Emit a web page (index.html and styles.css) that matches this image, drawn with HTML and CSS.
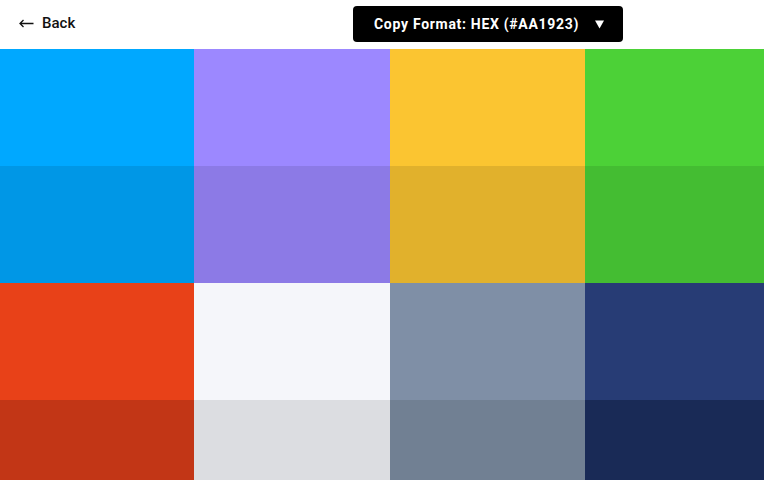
FILE: index.html
```html
<!DOCTYPE html>
<html lang="en">
<head>
<meta charset="utf-8">
<title>Palette</title>
<link rel="stylesheet" href="styles.css">
</head>
<body>
<header class="topbar">
  <a class="back" href="#"><svg class="arrow" width="15" height="9" viewBox="0 0 15 9"><path d="M14.5 4.5H1M4.5 1L1 4.5L4.5 8" fill="none" stroke="#111" stroke-width="1.3"/></svg>Back</a>
  <button class="format-btn" type="button">
    <span class="format-label">Copy Format: HEX (#AA1923)</span>
    <svg class="caret" width="9" height="9" viewBox="0 0 9 9"><path d="M0 0.5H9L4.5 8.5Z" fill="#fff"/></svg>
  </button>
</header>
<main class="palette">
  <div class="swatch" style="background:#00a8ff"></div>
  <div class="swatch" style="background:#9c88ff"></div>
  <div class="swatch" style="background:#fbc531"></div>
  <div class="swatch" style="background:#4cd137"></div>
  <div class="swatch" style="background:#0097e6"></div>
  <div class="swatch" style="background:#8c7ae6"></div>
  <div class="swatch" style="background:#e1b12c"></div>
  <div class="swatch" style="background:#44bd32"></div>
  <div class="swatch" style="background:#e84118"></div>
  <div class="swatch" style="background:#f5f6fa"></div>
  <div class="swatch" style="background:#7f8fa6"></div>
  <div class="swatch" style="background:#273c75"></div>
  <div class="swatch" style="background:#c23616"></div>
  <div class="swatch" style="background:#dcdde1"></div>
  <div class="swatch" style="background:#718093"></div>
  <div class="swatch" style="background:#192a56"></div>
</main>
</body>
</html>
```

FILE: styles.css
```css
html, body {
  margin: 0;
  padding: 0;
  background: #fff;
  overflow: hidden;
  height: 480px;
}
body {
  font-family: Roboto, "Noto Sans", sans-serif;
  color: #000;
}
.topbar {
  height: 49px;
  display: flex;
  align-items: center;
  padding-left: 19px;
  box-sizing: border-box;
}
.back {
  display: flex;
  align-items: center;
  color: #111;
  text-decoration: none;
  font-size: 15px;
  font-weight: 500;
  margin-top: -3px;
  width: 85px;
}
.arrow {
  margin-right: 8px;
  margin-top: 1px;
}
.format-btn {
  margin-left: 249px;
  margin-top: -1px;
  width: 270px;
  height: 36px;
  background: #000;
  border: none;
  border-radius: 4px;
  color: #fff;
  display: flex;
  align-items: center;
  padding: 0 0 0 21px;
  font-family: Roboto, "Noto Sans", sans-serif;
  font-size: 14px;
  font-weight: 700;
  letter-spacing: 0.7px;
}
.format-label {
  white-space: nowrap;
}
.caret {
  margin-left: 16px;
}
.palette {
  display: grid;
  grid-template-columns: 194px 196px 195px 195px;
  grid-auto-rows: 117px;
  width: 780px;
}
```
